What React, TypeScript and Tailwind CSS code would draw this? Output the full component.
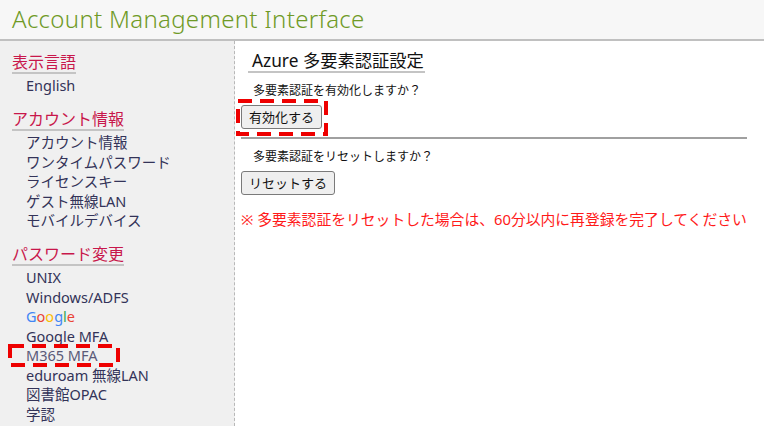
import React from "react";

const FONT = '"Noto Sans", "Noto Sans CJK JP", sans-serif';

function Dashed({ w, h, className }: { w: number; h: number; className: string }) {
  return (
    <svg className={className} width={w} height={h} viewBox={`0 0 ${w} ${h}`}>
      <rect x={2} y={2} width={w - 4} height={h - 4} fill="none" stroke="#ee0000" strokeWidth={4} strokeDasharray="14 8" />
    </svg>
  );
}

function SideHeading({ children }: { children: React.ReactNode }) {
  return (
    <div className="h-[22px]">
      <span className="inline-block h-[22px] overflow-visible text-[16px] leading-[20px] text-[#c8174b] border-b-2 border-[#c4c4c4] align-top">{children}</span>
    </div>
  );
}

function Items({ items }: { items: React.ReactNode[] }) {
  return (
    <ul className="pt-[2px] pl-[14px]">
      {items.map((it, i) => (
        <li key={i} className="h-[19.5px] text-[14.5px] leading-[19.5px] text-[#333358] whitespace-nowrap">
          {it}
        </li>
      ))}
    </ul>
  );
}

export default function App() {
  return (
    <div className="w-[764px] h-[426px] overflow-hidden flex flex-col bg-white" style={{ fontFamily: FONT }}>
      <header className="h-[41px] shrink-0 bg-[#f7f7f7] border-b-2 border-[#c0c0c0] pl-[12px] flex items-start">
        <h1 className="text-[24px] leading-[38px] text-[#6f9a26] font-light tracking-[0.3px]">Account Management Interface</h1>
      </header>
      <div className="flex flex-1 min-h-0">
        <aside className="w-[235px] shrink-0 bg-[#f0f0f0] border-r border-dashed border-[#b8b8b8] pl-[12px] pt-[11px] relative">
          <SideHeading>表示言語</SideHeading>
          <Items items={["English"]} />
          <div className="mt-[13.5px]">
            <SideHeading>アカウント情報</SideHeading>
          </div>
          <Items items={["アカウント情報", "ワンタイムパスワード", "ライセンスキー", "ゲスト無線LAN", "モバイルデバイス"]} />
          <div className="mt-[13.5px]">
            <SideHeading>パスワード変更</SideHeading>
          </div>
          <Items
            items={[
              "UNIX",
              "Windows/ADFS",
              <span>
                <span className="text-[#4285f4]">G</span>
                <span className="text-[#ea4335]">o</span>
                <span className="text-[#fbbc05]">o</span>
                <span className="text-[#4285f4]">g</span>
                <span className="text-[#34a853]">l</span>
                <span className="text-[#ea4335]">e</span>
              </span>,
              "Google MFA",
              <span className="text-[#5a5a78]">M365 MFA</span>,
              "eduroam 無線LAN",
              "図書館OPAC",
              "学認",
            ]}
          />
          <Dashed w={112} h={23} className="absolute left-[8px] top-[303px]" />
        </aside>
        <main className="flex-1 pl-[6px] pr-[21px] pt-[10px] relative">
          <div className="pl-[7px] h-[22px]">
            <h2 className="inline-block h-[22px] align-top pl-[4px] pr-[1px] text-[17.3px] leading-[20px] text-[#111] border-b-2 border-[#c4c4c4] whitespace-nowrap">
              Azure 多要素認証設定
            </h2>
          </div>
          <p className="mt-[10px] h-[16px] pl-[12px] text-[12px] leading-[16px] text-[#111]">多要素認証を有効化しますか？</p>
          <button className="mt-[6px] h-[24px] px-[7px] text-[13px] leading-[20px] text-[#111] bg-[#efefef] border border-[#7a7a7a] rounded-[3px] block">
            有効化する
          </button>
          <div className="mt-[8px] border-t-2 border-[#a0a0a0]" />
          <p className="mt-[10px] h-[16px] pl-[12px] text-[12px] leading-[16px] text-[#111]">多要素認証をリセットしますか？</p>
          <button className="mt-[6px] h-[24px] px-[7px] text-[13px] leading-[20px] text-[#111] bg-[#efefef] border border-[#7a7a7a] rounded-[3px] block">
            リセットする
          </button>
          <p className="mt-[14px] h-[20px] text-[14.8px] leading-[20px] text-[#ff1a1a] whitespace-nowrap">※ 多要素認証をリセットした場合は、60分以内に再登録を完了してください</p>
          <Dashed w={92} h={37} className="absolute left-[1px] top-[58px]" />
        </main>
      </div>
    </div>
  );
}
